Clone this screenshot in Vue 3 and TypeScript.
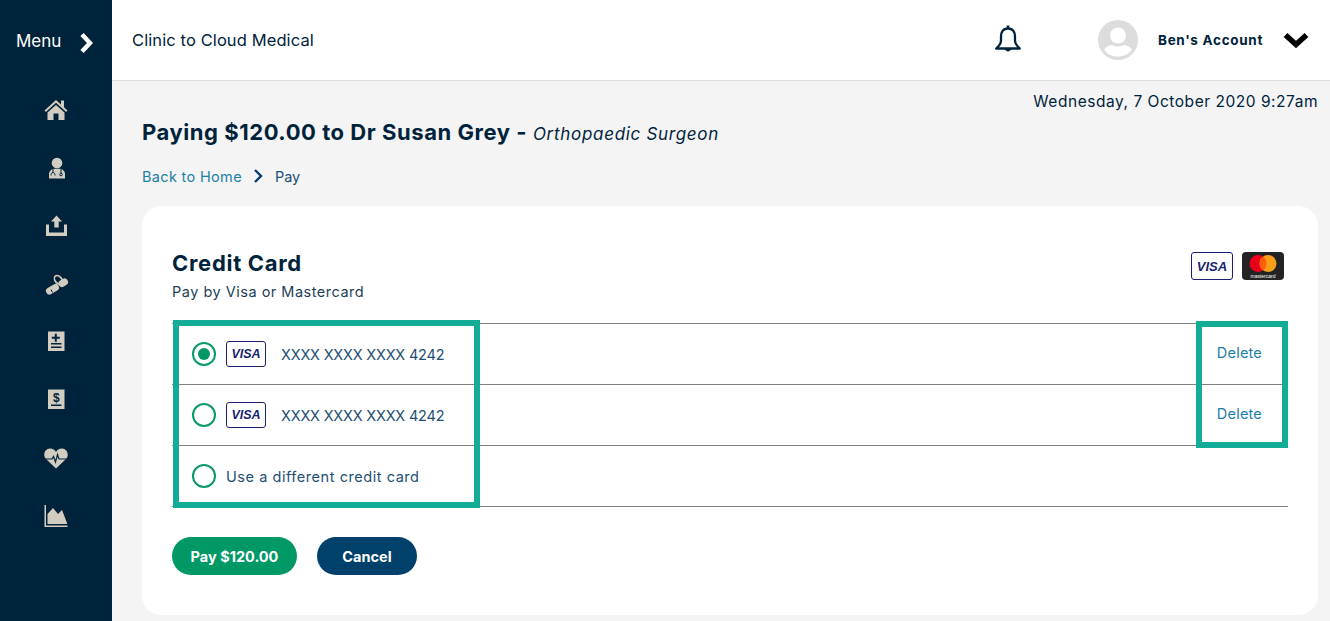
<script setup lang="ts">
const navIcons: { name: string }[] = [
  { name: 'home' },
  { name: 'doctor' },
  { name: 'upload' },
  { name: 'pills' },
  { name: 'notes' },
  { name: 'bill' },
  { name: 'heart' },
  { name: 'chart' },
]
const cards = [
  { id: 1, checked: true, number: 'XXXX XXXX XXXX 4242' },
  { id: 2, checked: false, number: 'XXXX XXXX XXXX 4242' },
]
</script>

<template>
  <div class="page">
    <aside class="sidebar">
      <div class="menu">
        <span class="menu-label">Menu</span>
        <svg class="menu-chev" width="14" height="22" viewBox="0 0 14 22"><path d="M3 2.500 11 11 3 19.500" fill="none" stroke="#fff" stroke-width="4.500"/></svg>
      </div>
      <nav class="nav">
        <div v-for="icon in navIcons" :key="icon.name" class="nav-item">
          <svg width="26" height="24" viewBox="0 0 26 24" fill="#d2cdc0">
            <template v-if="icon.name === 'home'">
              <path d="M13 2 1.500 12.500l1.300 1.500L13 4.800l10.200 9.200 1.300-1.500L21 9.300V2.500h-3V6.500z"/>
              <path d="M4.500 14.500 13 7l8.500 7.500v7.500H15.500V15.500h-5V22H4.500z"/>
            </template>
            <template v-else-if="icon.name === 'doctor'">
              <circle cx="14" cy="7" r="5.300"/>
              <path d="M6 22.500v-4.500c0-3 2.500-5 5-5.300h6c2.500.3 5 2.300 5 5.300v4.500z"/>
              <path d="M10 13v3.500M10 16.500c-1.500 0-2 1.500-2 3M10 16.500c1.500 0 2 1.500 2 3M18 13v4" fill="none" stroke="#00233c" stroke-width="1"/>
              <circle cx="18" cy="18.500" r="1.300" fill="none" stroke="#00233c" stroke-width="1"/>
            </template>
            <template v-else-if="icon.name === 'upload'">
              <path d="M13.500 1.500 19 7.500h-3.300v6h-4.400v-6H8z"/>
              <path d="M3 10.500h3v8h15v-8h3V22H3z"/>
            </template>
            <template v-else-if="icon.name === 'pills'">
              <path d="M6.500 19 12.500 15.500" fill="none" stroke="#d2cdc0" stroke-width="7" stroke-linecap="round"/>
              <path d="M19 11.500 21.500 10" fill="none" stroke="#d2cdc0" stroke-width="7" stroke-linecap="round"/>
              <path d="M9.500 20.500 8 17.500" fill="none" stroke="#00233c" stroke-width="1"/>
              <ellipse cx="15.500" cy="8" rx="5" ry="3.300" transform="rotate(50 15.500 8)" fill="none" stroke="#d2cdc0" stroke-width="1.600"/>
            </template>
            <template v-else-if="icon.name === 'notes'">
              <path d="M5 1.500h16.500v19.500H5z"/>
              <path d="M11.800 3.700h2v3h3v2h-3v3h-2v-3h-3v-2h3zM8 13h10.500v1.500H8zM8 16.500h10.500V18H8z" fill="#00233c"/>
            </template>
            <template v-else-if="icon.name === 'bill'">
              <path d="M5 1.500h16.500v19.500H5z"/>
              <path d="M8 16.500h10.500V18H8z" fill="#00233c"/>
              <text x="13.300" y="13.500" text-anchor="middle" font-family="'Liberation Sans',sans-serif" font-size="12" font-weight="700" fill="#00233c">$</text>
            </template>
            <template v-else-if="icon.name === 'heart'">
              <path d="M13 22.500 3 13C-.5 9.500 1.500 2.500 7 2.500c2.800 0 4.800 1.500 6 3.500 1.200-2 3.200-3.500 6-3.500 5.500 0 7.500 7 4 10.500z"/>
              <path d="M1 13h8l1.500-2.500 2 5.500 2-7.500 1.500 4.500h9" fill="none" stroke="#00233c" stroke-width="1.200"/>
            </template>
            <template v-else>
              <path d="M1.500 1h1.500v20.500h21.500V23H1.500z"/>
              <path d="M4.500 20V10L10 4l5 6 4-4 5 13v1z"/>
            </template>
          </svg>
        </div>
      </nav>
    </aside>

    <div class="main">
      <header class="topbar">
        <span class="clinic">Clinic to Cloud Medical</span>
        <div class="top-right">
          <svg class="bell" width="30" height="32" viewBox="0 0 30 32" fill="none" stroke="#00233c" stroke-width="2.300">
            <path d="M15 4.500c-5 0-7 3.800-7 8v4c0 3-2 5.500-4.800 8h23.600c-2.800-2.500-4.800-5-4.800-8v-4c0-4.200-2-8-7-8z" stroke-linejoin="round"/>
            <path d="M15 1.500v3" stroke-width="2.600"/>
            <path d="M12 25c.5 3.300 5.500 3.300 6 0z" fill="#00233c" stroke="none"/>
          </svg>
          <svg class="avatar" width="40" height="40" viewBox="0 0 40 40">
            <circle cx="20" cy="20" r="20" fill="#dcdcdc"/>
            <circle cx="20" cy="15.500" r="8" fill="#fff"/>
            <path d="M6 29.500C9 26 12 25 14.500 25c3 2 8 2 11 0 2.500 0 5.500 1 8.500 4.500C31 34 26 36.500 20 36.500S9 34 6 29.500z" fill="#fff"/>
          </svg>
          <span class="account">Ben's Account</span>
          <svg class="down" width="26" height="16" viewBox="0 0 26 16"><path d="M2.500 3l10.500 9.500L23.500 3" fill="none" stroke="#000" stroke-width="5.500"/></svg>
        </div>
      </header>

      <main class="content">
        <div class="date">Wednesday, 7 October 2020 9:27am</div>
        <h1 class="title">Paying $120.00 to Dr Susan Grey - <em>Orthopaedic Surgeon</em></h1>
        <div class="crumbs">
          <a class="link">Back to Home</a>
          <svg width="12" height="16" viewBox="0 0 12 16"><path d="M3 2l6 6-6 6" fill="none" stroke="#003f6b" stroke-width="2.400"/></svg>
          <span class="crumb-current">Pay</span>
        </div>

        <section class="card">
          <div class="card-head">
            <div>
              <h2 class="card-title">Credit Card</h2>
              <p class="card-sub">Pay by Visa or Mastercard</p>
            </div>
            <div class="brands">
              <span class="visa visa-large">VISA</span>
              <svg width="42" height="28" viewBox="0 0 42 28">
                <rect width="42" height="28" rx="4" fill="#232323"/>
                <circle cx="16" cy="11.500" r="8.500" fill="#eb001b"/>
                <circle cx="26" cy="11.500" r="8.500" fill="#f79e1b"/>
                <path d="M21 4.600a8.500 8.500 0 0 1 0 13.800 8.500 8.500 0 0 1 0-13.800z" fill="#ff5f00"/>
                <text x="21" y="25.500" text-anchor="middle" font-family="'Liberation Sans',sans-serif" font-size="5" fill="#fff">mastercard</text>
              </svg>
            </div>
          </div>

          <div class="rows">
            <div v-for="c in cards" :key="c.id" class="row">
              <span class="radio" :class="{ on: c.checked }"></span>
              <span class="visa">VISA</span>
              <span class="number">{{ c.number }}</span>
              <a class="delete">Delete</a>
            </div>
            <div class="row">
              <span class="radio"></span>
              <span class="other">Use a different credit card</span>
            </div>
            <div class="mark mark-left"></div>
            <div class="mark mark-right"></div>
          </div>

          <div class="actions">
            <button class="btn pay">Pay $120.00</button>
            <button class="btn cancel">Cancel</button>
          </div>
        </section>
      </main>
    </div>
  </div>
</template>

<style>
html, body { margin: 0; background: #f4f4f4; }
</style>

<style scoped>
.page {
  display: flex;
  height: 621px;
  overflow: hidden;
  font-family: Inter, "Open Sans", sans-serif;
  color: #00233c;
  background: #f4f4f4;
}
.sidebar {
  width: 112px;
  flex: none;
  background: #00233c;
  color: #fff;
}
.menu {
  display: flex;
  align-items: center;
  height: 81px;
  padding: 5px 0 0 16px;
  box-sizing: border-box;
}
.menu-label { font-size: 17px; width: 63px; position: relative; top: -2px; }
.nav { display: flex; flex-direction: column; }
.nav-item {
  height: 58px;
  display: flex;
  align-items: center;
  justify-content: center;
}
.main { flex: 1; display: flex; flex-direction: column; min-width: 0; }
.topbar {
  height: 81px;
  box-sizing: border-box;
  flex: none;
  background: #fff;
  border-bottom: 1px solid #dcdcdc;
  display: flex;
  align-items: center;
  justify-content: space-between;
  padding: 0 21px 0 20px;
}
.clinic { font-size: 16.500px; letter-spacing: 0.1px; color: #00233c; }
.top-right { display: flex; align-items: center; }
.bell { margin-right: 75px; }
.avatar { margin-right: 20px; }
.account { font-size: 13.500px; font-weight: 700; letter-spacing: 0.7px; width: 125px; white-space: nowrap; }
.down { display: block; }
.content { flex: 1; padding: 0 12px 0 30px; position: relative; }
.date { text-align: right; font-size: 15.500px; letter-spacing: 0.53px; line-height: 20px; margin-top: 11px; color: #00233c; }
.title { margin: 6px 0 0; font-size: 22px; font-weight: 700; letter-spacing: 0.55px; line-height: 28px; white-space: nowrap; }
.title em { font-weight: 400; font-size: 17px; letter-spacing: 0.7px; }
.crumbs { display: flex; align-items: center; gap: 10px; margin-top: 18px; height: 20px; font-size: 14.500px; }
.link { color: #1c7fa6; letter-spacing: 0.33px; }
.crumb-current { color: #1d4f73; margin-left: 1px; }
.card {
  background: #fff;
  border-radius: 20px;
  height: 409px;
  margin-top: 20px;
  padding: 0 30px;
  box-sizing: border-box;
}
.card-head {
  display: flex;
  justify-content: space-between;
  padding-top: 44px;
  height: 117px;
  box-sizing: border-box;
}
.card-title { margin: 0; font-size: 22px; line-height: 27px; font-weight: 700; letter-spacing: 0.7px; }
.card-sub { margin: 5px 0 0; font-size: 14.500px; letter-spacing: 0.5px; line-height: 20px; color: #1d3f5a; }
.brands { display: flex; gap: 9px; padding: 2px 4px 0 0; align-items: flex-start; }
.visa {
  width: 40px;
  height: 26px;
  box-sizing: border-box;
  flex: none;
  border: 1px solid #1a1f71;
  border-radius: 3px;
  display: flex;
  align-items: center;
  justify-content: center;
  color: #1a1f71;
  font: italic 700 12.500px "Liberation Sans", sans-serif;
}
.visa-large { height: 28px; width: 42px; font-size: 13px; }
.rows { position: relative; border-top: 1px solid #808080; }
.row {
  height: 61px;
  box-sizing: border-box;
  border-bottom: 1px solid #808080;
  display: flex;
  align-items: center;
  padding-left: 20px;
  font-size: 14.500px;
  color: #1d4f73;
}
.radio {
  width: 24px;
  height: 24px;
  box-sizing: border-box;
  border: 2px solid #0a9a6a;
  border-radius: 50%;
  margin-right: 10px;
  flex: none;
  position: relative;
}
.radio.on::after {
  content: "";
  position: absolute;
  inset: 4px;
  background: #009966;
  border-radius: 50%;
}
.number { margin-left: 15px; letter-spacing: -0.2px; white-space: nowrap; }
.other { letter-spacing: 0.55px; }
.delete { margin-left: auto; margin-right: 26px; color: #1c7fa6; letter-spacing: 0.2px; position: relative; top: -2px; }
.mark {
  position: absolute;
  border: 6px solid #13ad97;
  box-sizing: border-box;
  pointer-events: none;
}
.mark-left { left: 1px; top: -4px; width: 307px; height: 188px; }
.mark-right { left: 1024px; top: -3px; width: 92px; height: 127px; }
.actions { display: flex; gap: 20px; margin-top: 30px; }
.btn {
  height: 38px;
  border: none;
  border-radius: 19px;
  color: #fff;
  font-family: inherit;
  font-size: 14.500px;
  font-weight: 700;
  padding: 0;
}
.pay { width: 125px; background: #009966; }
.cancel { width: 100px; background: #00416b; }
</style>
